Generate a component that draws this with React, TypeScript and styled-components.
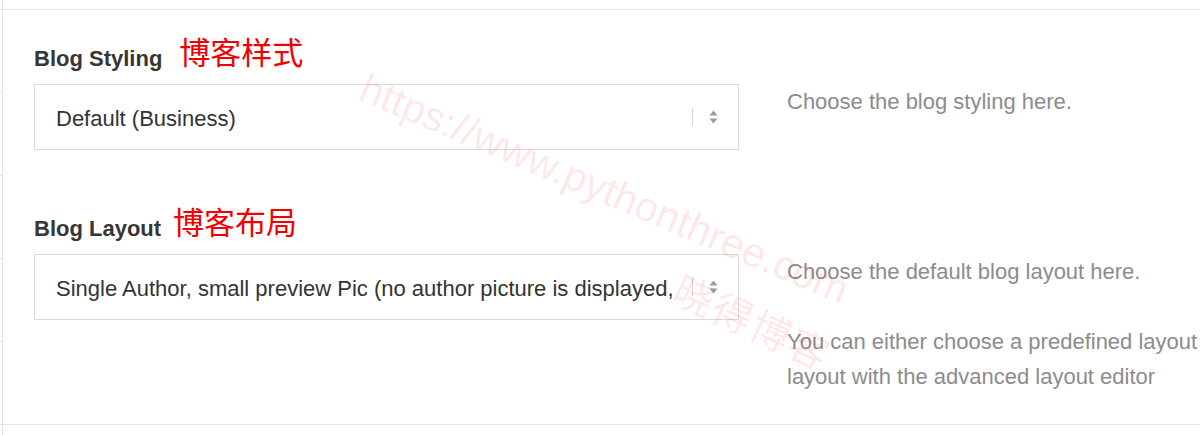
import React from "react";
import styled, { createGlobalStyle } from "styled-components";

const GlobalStyle = createGlobalStyle`
  html, body { margin: 0; padding: 0; background: #fff; }
  body {
    width: 1200px;
    height: 435px;
    overflow: hidden;
    font-family: "Liberation Sans", Arial, sans-serif;
  }
`;

const Page = styled.div`
  position: relative;
  display: flex;
  width: 1200px;
  height: 435px;
  overflow: hidden;
  background: #fff;
`;

const SideStrip = styled.div`
  width: 2px;
  flex-shrink: 0;
  display: flex;
  flex-direction: column;
  padding-top: 9px;
`;

const Tick = styled.div`
  height: 83px;
  flex-shrink: 0;
  box-sizing: border-box;
  border-top: 1px solid #e2e2e2;
`;

const Panel = styled.div`
  flex: 1;
  min-width: 0;
  border-left: 1px solid #e4e4e4;
  padding-top: 9px;
`;

const Section = styled.section`
  display: flex;
  flex-direction: column;
  gap: 30px;
  border-top: 1px solid #e6e6e6;
  border-bottom: 1px solid #e6e6e6;
  padding: 0 0 30px 31px;
`;

const Field = styled.div`
  display: grid;
  grid-template-columns: 705px max-content;
  column-gap: 48px;
`;

const Header = styled.div`
  grid-column: 1 / span 2;
  height: 74px;
  box-sizing: border-box;
  padding-top: 27px;
  display: flex;
  align-items: baseline;
`;

const Label = styled.span`
  font-size: 22px;
  line-height: 1;
  font-weight: 700;
  color: #363636;
`;

const Annotation = styled.span<{ $gap: number }>`
  margin-left: ${(p) => p.$gap}px;
  font-family: "Noto Sans CJK SC", "Noto Sans", sans-serif;
  font-size: 31px;
  line-height: 1;
  color: #f20000;
  position: relative;
  top: -2px;
`;

const Select = styled.div`
  height: 66px;
  box-sizing: border-box;
  border: 1px solid #dadada;
  background: #fff;
  display: flex;
  align-items: center;
  padding: 0 20px 0 21px;
`;

const SelectText = styled.span`
  flex: 1;
  min-width: 0;
  overflow: hidden;
  white-space: nowrap;
  font-size: 22px;
  padding-top: 3px;
  color: #333;
`;

const Divider = styled.span`
  width: 1px;
  height: 18px;
  background: #d6d6d6;
  margin: 0 16px 0 12px;
  flex-shrink: 0;
`;

const Arrows = styled.svg`
  width: 9px;
  height: 14px;
  flex-shrink: 0;
  fill: #9b9b9b;
`;

const Desc = styled.div`
  font-size: 22px;
  line-height: 35px;
  color: #8c8c8c;
  white-space: nowrap;
`;

const DescPara = styled.p`
  margin: 0 0 35px;
  &:last-child { margin-bottom: 0; }
`;

const Watermark = styled.div<{ $size: number; $angle: number; $spacing?: number }>`
  position: absolute;
  pointer-events: none;
  white-space: nowrap;
  font-family: "Liberation Sans", "Noto Sans CJK SC", sans-serif;
  font-size: ${(p) => p.$size}px;
  letter-spacing: ${(p) => p.$spacing ?? 0}px;
  line-height: 1;
  color: rgba(240, 0, 0, 0.1);
  transform: rotate(${(p) => p.$angle}deg);
  transform-origin: 0 50%;
`;

const SelectArrows = () => (
  <Arrows viewBox="0 0 9 14">
    <path d="M0.5 5.5 L4.5 0.5 L8.5 5.5 Z" />
    <path d="M0.5 8.5 L4.5 13.5 L8.5 8.5 Z" />
  </Arrows>
);

type FieldProps = {
  label: string;
  note: string;
  gap: number;
  value: string;
  desc: React.ReactNode[];
};

const OptionField = ({ label, note, gap, value, desc }: FieldProps) => (
  <Field>
    <Header>
      <Label>{label}</Label>
      <Annotation $gap={gap}>{note}</Annotation>
    </Header>
    <Select>
      <SelectText>{value}</SelectText>
      <Divider />
      <SelectArrows />
    </Select>
    <Desc>
      {desc.map((d, i) => (
        <DescPara key={i}>{d}</DescPara>
      ))}
    </Desc>
  </Field>
);

export default function App() {
  return (
    <>
      <GlobalStyle />
      <Page>
        <SideStrip>
          {Array.from({ length: 6 }).map((_, i) => (
            <Tick key={i} />
          ))}
        </SideStrip>
        <Panel>
          <Section>
            <OptionField
              label="Blog Styling"
              note="博客样式"
              gap={17}
              value="Default (Business)"
              desc={["Choose the blog styling here."]}
            />
            <OptionField
              label="Blog Layout"
              note="博客布局"
              gap={12}
              value="Single Author, small preview Pic (no author picture is displayed,"
              desc={[
                "Choose the default blog layout here.",
                <>
                  You can either choose a predefined layout or create your own
                  <br />
                  layout with the advanced layout editor
                </>,
              ]}
            />
          </Section>
        </Panel>
        <Watermark $size={41} $angle={23} style={{ left: 362, top: 66 }}>
          https://www.pythonthree.com
        </Watermark>
        <Watermark $size={40} $angle={25} $spacing={2} style={{ left: 676, top: 268 }}>
          晓得博客
        </Watermark>
      </Page>
    </>
  );
}
